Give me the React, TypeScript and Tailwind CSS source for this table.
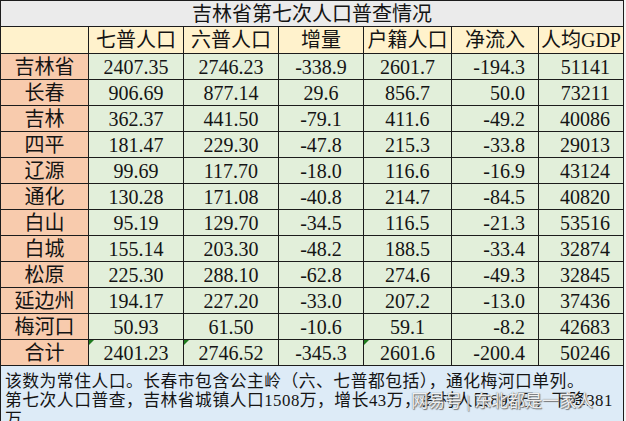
import React from 'react'

const rows: string[][] = [
  ['吉林省', '2407.35', '2746.23', '-338.9', '2601.7', '-194.3', '51141'],
  ['长春', '906.69', '877.14', '29.6', '856.7', '50.0', '73211'],
  ['吉林', '362.37', '441.50', '-79.1', '411.6', '-49.2', '40086'],
  ['四平', '181.47', '229.30', '-47.8', '215.3', '-33.8', '29013'],
  ['辽源', '99.69', '117.70', '-18.0', '116.6', '-16.9', '43124'],
  ['通化', '130.28', '171.08', '-40.8', '214.7', '-84.5', '40820'],
  ['白山', '95.19', '129.70', '-34.5', '116.5', '-21.3', '53516'],
  ['白城', '155.14', '203.30', '-48.2', '188.5', '-33.4', '32874'],
  ['松原', '225.30', '288.10', '-62.8', '274.6', '-49.3', '32845'],
  ['延边州', '194.17', '227.20', '-33.0', '207.2', '-13.0', '37436'],
  ['梅河口', '50.93', '61.50', '-10.6', '59.1', '-8.2', '42683'],
  ['合计', '2401.23', '2746.52', '-345.3', '2601.6', '-200.4', '50246'],
]

const headers = ['', '七普人口', '六普人口', '增量', '户籍人口', '净流入', '人均GDP']

// excel 的绿色小三角（数字以文本存储）
const flagged = [1, 2, 4]

function Flag() {
  return (
    <span className="absolute left-0 top-0 w-0 h-0 border-t-[5px] border-r-[5px] border-t-[#1e7b1e] border-r-transparent" />
  )
}

export default function App() {
  return (
    <div
      className="w-[626px] h-[421px] overflow-hidden bg-[#f4f4f4] text-[#141414]"
      style={{ fontFamily: '"Liberation Serif", "Noto Sans CJK SC", serif' }}
    >
      <div className="w-[624px] grid grid-cols-[88px_95px_95px_85px_88px_87px_85px] border-l border-t border-[#1c1c1c]">
        {/* 标题 */}
        <div className="col-span-7 h-[26px] bg-[#ebebeb] border-r border-b border-[#1c1c1c] flex items-center justify-center text-[20px] leading-none">
          吉林省第七次人口普查情况
        </div>

        {/* 表头 */}
        {headers.map((h, i) => (
          <div
            key={i}
            className="h-[27px] bg-[#fff2cc] border-r border-b border-[#1c1c1c] flex items-center justify-center text-[20px] leading-none"
          >
            {h}
          </div>
        ))}

        {/* 数据 */}
        {rows.map((r, ri) =>
          r.map((v, ci) => {
            const isName = ci === 0
            const right = ci === 5 || ci === 6
            return (
              <div
                key={`${ri}-${ci}`}
                className={`relative h-[26px] border-r border-b border-[#1c1c1c] flex items-center text-[20px] leading-none ${
                  isName ? 'bg-[#f8cbad]' : 'bg-[#e2efda]'
                } ${right ? 'justify-end pr-[13px]' : 'justify-center'}`}
              >
                {ri === rows.length - 1 && flagged.includes(ci) && <Flag />}
                {v}
              </div>
            )
          })
        )}
      </div>

      {/* 备注 */}
      <div className="relative w-[624px] h-[60px] bg-[#ddebf7] border-l border-r border-[#1c1c1c] px-[4px] pt-[6px] text-[16.8px] leading-[19px] tracking-[0.5px]">
        <p>该数为常住人口。长春市包含公主岭（六、七普都包括），通化梅河口单列。</p>
        <p>第七次人口普查，吉林省城镇人口1508万，增长43万，乡村人口899万，下降381万</p>
        <span
          className="absolute left-[410px] top-[26px] text-[17px] leading-[19px] tracking-normal text-white/90 whitespace-nowrap"
          style={{ textShadow: '0 0 1px #555, 1px 1px 1px #777' }}
        >
          网易号 | 东北都是一家人
        </span>
      </div>
    </div>
  )
}
